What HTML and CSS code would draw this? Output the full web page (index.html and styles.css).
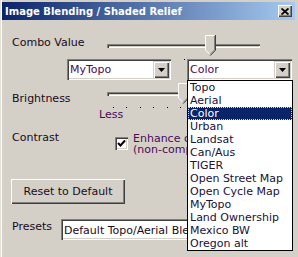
FILE: index.html
```html
<!DOCTYPE html>
<html lang="en">
<head>
  <meta charset="UTF-8">
  <title>Image Blending / Shaded Relief</title>
  <link rel="stylesheet" href="styles.css">
</head>
<body>
  <div class="window">
    <div class="titlebar">
      <span class="title">Image Blending / Shaded Relief</span>
      <button class="close">
        <svg width="8" height="7" viewBox="0 0 8 7"><path d="M0.5 0.5 L7.5 6.5 M7.5 0.5 L0.5 6.5" stroke="#000" stroke-width="1.8"/></svg>
      </button>
    </div>

    <div class="panel">
      <div class="row row-combo">
        <span class="label label-combo">Combo Value</span>
        <div class="slider">
          <div class="track"></div>
          <div class="ticks ticks-wide"><i></i><i></i><i></i><i></i><i></i><i></i><i></i><i></i><i></i><i></i><i></i></div>
          <svg class="thumb" style="left: 98px" width="11" height="22" viewBox="0 0 11 22">
            <polygon points="0,0 10,0 10,15 5,20 0,15" fill="#d4d0c8"/>
            <polyline points="5,19.5 0.5,15 0.5,0.5 9.5,0.5" fill="none" stroke="#fff"/>
            <polyline points="9.5,1 9.5,15 5,19.5" fill="none" stroke="#808080"/>
            <polyline points="10.5,0 10.5,15.2 5.2,20.6" fill="none" stroke="#404040"/>
          </svg>
        </div>
      </div>

      <div class="row row-selects">
        <div class="select select-one">
          <span class="value">MyTopo</span>
          <span class="arrow"><svg width="7" height="4" viewBox="0 0 7 4"><polygon points="0,0 7,0 3.5,4" fill="#000"/></svg></span>
        </div>
        <div class="select select-two">
          <span class="value">Color</span>
          <span class="arrow"><svg width="7" height="4" viewBox="0 0 7 4"><polygon points="0,0 7,0 3.5,4" fill="#000"/></svg></span>
        </div>
      </div>

      <div class="row row-bright">
        <span class="label label-bright">Brightness</span>
        <div class="slider">
          <div class="track"></div>
          <div class="ticks ticks-narrow"><i></i><i></i><i></i><i></i><i></i><i></i><i></i><i></i><i></i><i></i><i></i></div>
          <svg class="thumb" style="left: 71px" width="11" height="22" viewBox="0 0 11 22">
            <polygon points="0,0 10,0 10,15 5,20 0,15" fill="#d4d0c8"/>
            <polyline points="5,19.5 0.5,15 0.5,0.5 9.5,0.5" fill="none" stroke="#fff"/>
            <polyline points="9.5,1 9.5,15 5,19.5" fill="none" stroke="#808080"/>
            <polyline points="10.5,0 10.5,15.2 5.2,20.6" fill="none" stroke="#404040"/>
          </svg>
        </div>
      </div>

      <div class="row row-less">
        <span class="less">Less</span>
      </div>

      <div class="row row-contrast">
        <span class="label label-contrast">Contrast</span>
        <span class="checkbox">
          <svg width="9" height="9" viewBox="0 0 9 9"><polyline points="1,4 3.5,6.5 8,1.5" fill="none" stroke="#000" stroke-width="2"/></svg>
        </span>
        <span class="check-text">Enhance contrast<br>(non-compressed)</span>
      </div>

      <div class="row row-reset">
        <button class="btn-reset">Reset to Default</button>
      </div>

      <div class="row row-presets">
        <span class="label label-presets">Presets</span>
        <div class="select select-presets">
          <span class="value">Default Topo/Aerial Blend</span>
          <span class="arrow"><svg width="7" height="4" viewBox="0 0 7 4"><polygon points="0,0 7,0 3.5,4" fill="#000"/></svg></span>
        </div>
      </div>
    </div>

    <ul class="droplist">
      <li>Topo</li>
      <li>Aerial</li>
      <li class="selected">Color</li>
      <li>Urban</li>
      <li>Landsat</li>
      <li>Can/Aus</li>
      <li>TIGER</li>
      <li>Open Street Map</li>
      <li>Open Cycle Map</li>
      <li>MyTopo</li>
      <li>Land Ownership</li>
      <li>Mexico BW</li>
      <li>Oregon alt</li>
    </ul>
  </div>
</body>
</html>
```

FILE: styles.css
```css
body {
  margin: 0;
  background: #d4d0c8;
  font-family: "DejaVu Sans", Verdana, sans-serif;
  font-size: 11px;
  line-height: 13px;
  color: #1a0a1a;
}
.window {
  position: relative;
  width: 298px;
  height: 257px;
  box-sizing: border-box;
  padding: 2px 3px 0 2px;
  background: #d4d0c8;
  box-shadow: inset 1px 0 #e4e0d8, inset 2px 0 #fff;
  overflow: hidden;
}
.titlebar {
  display: flex;
  align-items: center;
  justify-content: space-between;
  height: 18px;
  padding: 0 3px 0 3px;
  background: linear-gradient(to right, #0a246a, #a6caf0);
}
.title {
  color: #fff;
  font-weight: bold;
  font-size: 10px;
}
.close {
  display: flex;
  align-items: center;
  justify-content: center;
  width: 14px;
  height: 12px;
  padding: 0;
  border: none;
  background: #d4d0c8;
  box-shadow: inset 1px 1px #fff, inset -1px -1px #404040, inset -2px -2px #808080;
}

.panel {
  padding-left: 10px;
}
.row {
  display: flex;
  align-items: flex-start;
}
.row-combo {
  margin-top: 15px;
  height: 24px;
}
.label-combo {
  width: 95px;
  padding-top: 1px;
}
.slider {
  position: relative;
  width: 153px;
  height: 24px;
}
.track {
  margin-top: 9px;
  height: 4px;
  box-sizing: border-box;
  background: #d4d0c8;
  box-shadow: inset 1px 1px #808080, inset 2px 2px #404040, inset -1px -1px #fff;
}
.thumb {
  position: absolute;
  top: 0;
}
.ticks {
  position: absolute;
  top: 24px;
  left: 6px;
  display: flex;
}
.ticks i {
  width: 1px;
  height: 1px;
  background: #000;
}
.ticks-wide {
  gap: 13.2px;
}
.ticks-narrow {
  gap: 12.4px;
}

.row-selects {
  height: 22px;
}
.select {
  position: relative;
  display: flex;
  justify-content: space-between;
  height: 21px;
  box-sizing: border-box;
  padding: 2px;
  background: #fff;
  box-shadow: inset 1px 1px #808080, inset 2px 2px #404040, inset -1px -1px #fff, inset -2px -2px #d4d0c8;
  color: #4a0a5a;
}
.select .value {
  padding: 2px 0 0 1px;
  white-space: nowrap;
  overflow: hidden;
}
.select .arrow {
  display: flex;
  align-items: center;
  justify-content: center;
  flex: none;
  width: 16px;
  height: 17px;
  background: #d4d0c8;
  box-shadow: inset 1px 1px #d4d0c8, inset 2px 2px #fff, inset -1px -1px #404040, inset -2px -2px #808080;
}
.select-one {
  width: 104px;
  margin-left: 55px;
}
.select-two {
  width: 105px;
  margin-left: 16px;
}

.row-bright {
  margin-top: 2px;
  height: 24px;
}
.label-bright {
  width: 95px;
  padding-top: 9px;
}
.row-less {
  height: 14px;
}
.less {
  padding: 1px 0 0 87px;
  color: #4a0a5a;
}

.row-contrast {
  margin-top: 10px;
  height: 25px;
}
.label-contrast {
  width: 103px;
}
.checkbox {
  display: flex;
  align-items: center;
  justify-content: center;
  width: 13px;
  height: 13px;
  margin-top: 6px;
  box-sizing: border-box;
  background: #fff;
  box-shadow: inset 1px 1px #808080, inset 2px 2px #404040, inset -1px -1px #fff, inset -2px -2px #d4d0c8;
}
.check-text {
  margin: 2px 0 0 5px;
  line-height: 11px;
  white-space: nowrap;
  color: #4a0a5a;
}

.row-reset {
  margin-top: 23px;
}
.btn-reset {
  width: 114px;
  height: 25px;
  margin-left: -1px;
  padding: 0;
  border: none;
  font: inherit;
  color: #1a0a1a;
  background: #d4d0c8;
  box-shadow: inset 1px 1px #fff, inset -1px -1px #404040, inset -2px -2px #808080;
}

.row-presets {
  margin-top: 15px;
}
.label-presets {
  width: 49px;
  padding-top: 1px;
}
.select-presets {
  width: 230px;
}
.select-presets .value {
  padding-top: 3px;
  color: #1a0a1a;
}

.droplist {
  position: absolute;
  left: 187px;
  top: 80px;
  width: 106px;
  height: 171px;
  box-sizing: border-box;
  margin: 0;
  padding: 0;
  list-style: none;
  background: #fff;
  border: 1px solid #000;
  color: #20103a;
}
.droplist li {
  height: 13px;
  padding-left: 2px;
  white-space: nowrap;
}
.droplist .selected {
  background: #0a246a;
  color: #fff;
  outline: 1px dotted #e8e0a0;
  outline-offset: -1px;
}
```
